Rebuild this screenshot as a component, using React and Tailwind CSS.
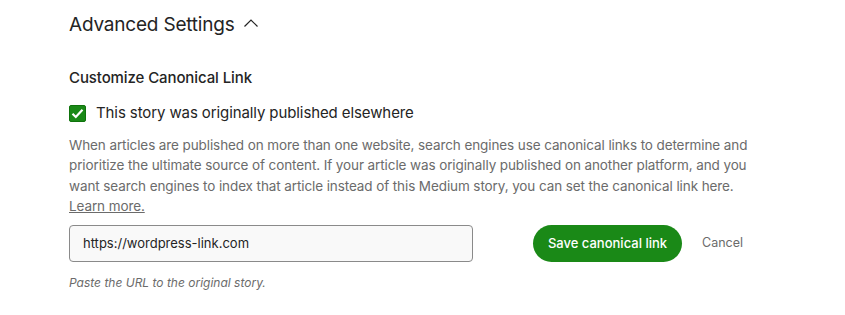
import React from 'react'

const App = () => {
  return (
    <div className="w-[845px] h-[315px] bg-white pl-[69px] pt-[11px] text-[#242424]" style={{ fontFamily: 'Inter, "Helvetica Neue", Arial, sans-serif' }}>
      <div className="flex items-center gap-[8px]">
        <h2 className="text-[19px] leading-[28px] tracking-[-0.2px]">Advanced Settings</h2>
        <svg width="16" height="10" viewBox="0 0 16 10" fill="none" className="mt-[-4px]">
          <path d="M1.5 8.5 L8 2 L14.5 8.5" stroke="#242424" strokeWidth="1.2" />
        </svg>
      </div>

      <div className="mt-[29px] text-[15px] leading-[20px] font-medium tracking-[-0.1px]">Customize Canonical Link</div>

      <label className="mt-[15px] flex items-center gap-[10px]">
        <span className="w-[17px] h-[17px] rounded-[2px] bg-[#1a8917] border border-[#0f730c] flex items-center justify-center">
          <svg width="13" height="11" viewBox="0 0 13 11" fill="none">
            <path d="M1.5 5.8 L4.8 9 L11.5 1.8" stroke="white" strokeWidth="2.2" />
          </svg>
        </span>
        <span className="text-[15px] leading-[20px] tracking-[-0.1px]">This story was originally published elsewhere</span>
      </label>

      <p className="mt-[12px] w-[700px] text-[13.5px] leading-[20.3px] text-[#6b6b6b] tracking-[-0.1px]">
        When articles are published on more than one website, search engines use canonical links to determine and prioritize the ultimate source of content. If your article was originally published on another platform, and you want search engines to index that article instead of this Medium story, you can set the canonical link here.{' '}
        <br />
        <span className="underline">Learn more.</span>
      </p>

      <div className="mt-[9px] flex items-center">
        <div className="w-[404px] h-[37px] rounded-[4px] border border-[#8a8a8a] bg-[#f9f9f9] flex items-center px-[13px] text-[13px] text-[#242424]">
          https://wordpress-link.com
        </div>
        <button className="ml-[60px] h-[37px] w-[149px] rounded-full bg-[#1a8917] text-white text-[13px] font-medium">
          Save canonical link
        </button>
        <button className="ml-[20px] text-[12.5px] text-[#6b6b6b]">Cancel</button>
      </div>

      <div className="mt-[12px] text-[12px] italic text-[#6b6b6b]">Paste the URL to the original story.</div>
    </div>
  )
}

export default App
